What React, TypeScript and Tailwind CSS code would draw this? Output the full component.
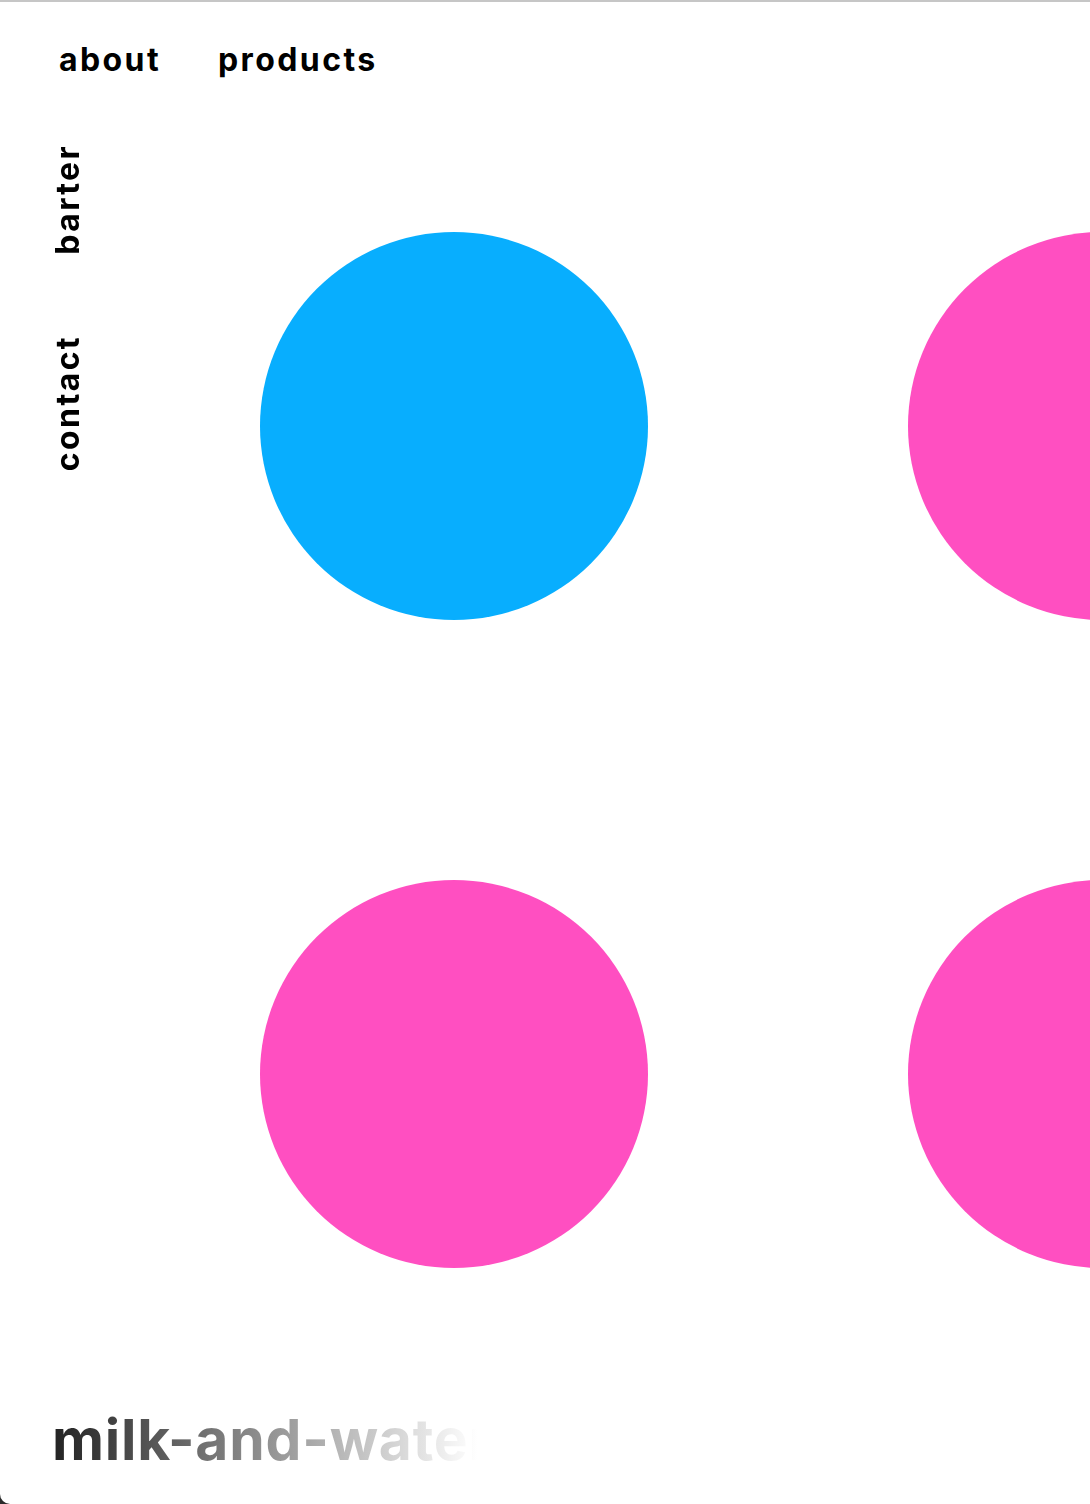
export default function App() {
  const font = { fontFamily: '"Inter", "Liberation Sans", sans-serif' };
  return (
    <div className="h-[1504px] w-[1090px] overflow-hidden bg-[#2a2a2a]" style={font}>
      <div className="relative flex h-full w-full flex-col overflow-hidden rounded-bl-[10px] border-t-2 border-[#c6c6c6] bg-white text-black">
        <header className="flex gap-[57px] pl-[59px] pt-[38px] text-[32px] font-bold leading-[40px] tracking-[2.4px]">
          <a>about</a>
          <a>products</a>
        </header>
        <div className="flex">
          <nav className="flex w-[260px] shrink-0 flex-col items-start gap-[80px] pl-[51px] pt-[64px] text-[32px] font-bold leading-[34px] tracking-[2.4px]">
            <a className="rotate-180 [writing-mode:vertical-rl]">barter</a>
            <a className="rotate-180 [writing-mode:vertical-rl]">contact</a>
          </nav>
          <div className="grid shrink-0 grid-cols-[388px_388px] gap-[260px] pt-[152px]">
            <div className="h-[388px] w-[388px] rounded-full bg-[#08aefe]" />
            <div className="h-[388px] w-[388px] rounded-full bg-[#ff4fc1]" />
            <div className="h-[388px] w-[388px] rounded-full bg-[#ff4fc1]" />
            <div className="h-[388px] w-[388px] rounded-full bg-[#ff4fc1]" />
          </div>
        </div>
        <div className="mt-auto pb-[32px] pl-[52px]">
          <span className="inline-block bg-[linear-gradient(90deg,#222_0px,#ffffff_425px)] bg-[length:425px_100%] bg-no-repeat bg-clip-text text-[57px] font-bold leading-[64px] tracking-[0.8px] text-transparent">
            milk-and-water
          </span>
        </div>
      </div>
    </div>
  );
}
